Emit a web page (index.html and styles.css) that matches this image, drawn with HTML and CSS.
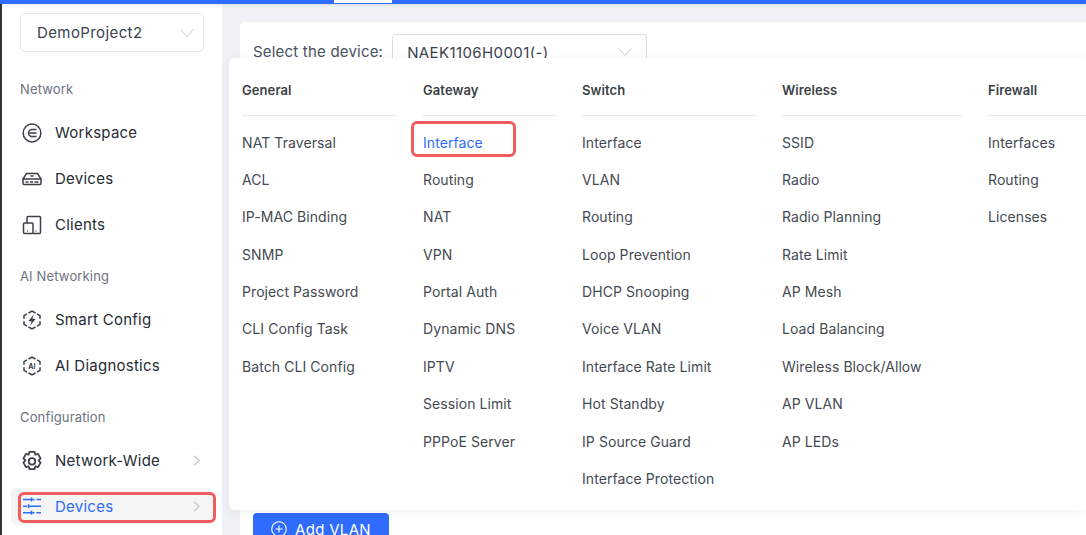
FILE: index.html
```html
<!DOCTYPE html>
<html lang="en">
<head>
<meta charset="utf-8">
<title>Devices</title>
<link rel="stylesheet" href="styles.css">
</head>
<body>
<div class="topbar"><span class="top-tab"></span></div>
<div class="app">
  <aside class="sidebar">
    <div class="project">
      <span>DemoProject2</span>
      <svg class="chev" width="14" height="8" viewBox="0 0 14 8"><path d="M.5.5 7 7.5 13.500.5"/></svg>
    </div>
    <div class="group-title first">Network</div>
    <a class="nav"><svg class="ic" viewBox="0 0 20 20"><circle cx="10" cy="10" r="8.900"/><path d="M14.500 6.500H10a3.500 3.500 0 0 0 0 7h4.500M7.500 10h7"/></svg>Workspace</a>
    <a class="nav"><svg class="ic" viewBox="0 0 20 20"><path d="M4.500 4.500h11L19 10v4.500a1 1 0 0 1-1 1H2a1 1 0 0 1-1-1V10zM1 10h18M8.500 7h3M3.500 13h3M8 13h3M12.500 13h4"/></svg>Devices</a>
    <a class="nav"><svg class="ic" viewBox="0 0 20 20"><path d="M5 8V2.500a1 1 0 0 1 1-1h11.500a1 1 0 0 1 1 1v15a1 1 0 0 1-1 1H11"/><rect x="1.500" y="8" width="9.500" height="10.500" rx="1"/><path d="M5 16h.8M13.500 16h.8"/></svg>Clients</a>
    <div class="group-title">AI Networking</div>
    <a class="nav"><svg class="ic" viewBox="0 0 20 20"><path d="M6.500 3 10 1l3.500 2M15 3.900l3 1.700v3.200M18 11.200v3.200l-3 1.700M13.500 17 10 19l-3.500-2M5 16.100l-3-1.700v-3.200M2 8.800V5.600l3-1.700"/><path d="M11.800 4.500 6.200 11.200h3.400l-1.400 4.300 5.600-6.700h-3.400z" class="fill"/></svg>Smart Config</a>
    <a class="nav"><svg class="ic" viewBox="0 0 20 20"><path d="M6.500 3 10 1l3.500 2M15 3.900l3 1.700v3.200M18 11.200v3.200l-3 1.700M13.500 17 10 19l-3.500-2M5 16.100l-3-1.700v-3.200M2 8.800V5.600l3-1.700"/><text x="10" y="12.600" class="ai">AI</text></svg>AI Diagnostics</a>
    <div class="group-title">Configuration</div>
    <a class="nav"><svg class="ic gear" viewBox="1.500 .2 17 18.600"><path d="M7.600 1h4.800l.7 2.700 2.500-.9 2.400 4.300-1.900 2 1.900 1.900-2.400 4.200-2.500-.8-.7 2.600H7.600l-.7-2.600-2.500.8L2 11 3.900 9 2 7.100l2.400-4.300 2.500.9z"/><circle cx="10" cy="9.900" r="3"/></svg>Network-Wide<svg class="arrow" width="7" height="11" viewBox="0 0 7 11"><path d="m1 .8 5 4.700-5 4.700"/></svg></a>
    <a class="nav active"><svg class="ic sliders" viewBox="0 0 20 20"><path d="M1 2.500h11.500M9.500.5v4M14.500 2.500H19M1 9.200h4M6.500 7.200v4M6.500 9.200H19M1 15.800h11.500M9.500 13.800v4M14.500 15.800H19"/></svg>Devices<svg class="arrow" width="7" height="11" viewBox="0 0 7 11"><path d="m1 .8 5 4.700-5 4.700"/></svg><span class="mark mark-nav"></span></a>
  </aside>
  <main class="content">
    <section class="card">
      <div class="device-row">
        <label>Select the device:</label>
        <div class="select"><span>NAEK1106H0001(-)</span><svg class="chev" width="14" height="8" viewBox="0 0 14 8"><path d="M.5.500 7 7.500 13.500.500"/></svg></div>
      </div>
      <button class="add"><svg width="16" height="16" viewBox="0 0 16 16"><circle cx="8" cy="8" r="7.300"/><path d="M8 4.500v7M4.500 8h7"/></svg>Add VLAN</button>
    </section>
  </main>
</div>
<div class="menu">
  <div class="col c1"><h4>General</h4><ul><li>NAT Traversal</li><li>ACL</li><li>IP-MAC Binding</li><li>SNMP</li><li>Project Password</li><li>CLI Config Task</li><li>Batch CLI Config</li></ul></div>
  <div class="col c2"><h4>Gateway</h4><ul><li class="on">Interface<span class="mark mark-menu"></span></li><li>Routing</li><li>NAT</li><li>VPN</li><li>Portal Auth</li><li>Dynamic DNS</li><li>IPTV</li><li>Session Limit</li><li>PPPoE Server</li></ul></div>
  <div class="col c3"><h4>Switch</h4><ul><li>Interface</li><li>VLAN</li><li>Routing</li><li>Loop Prevention</li><li>DHCP Snooping</li><li>Voice VLAN</li><li>Interface Rate Limit</li><li>Hot Standby</li><li>IP Source Guard</li><li>Interface Protection</li></ul></div>
  <div class="col c4"><h4>Wireless</h4><ul><li>SSID</li><li>Radio</li><li>Radio Planning</li><li>Rate Limit</li><li>AP Mesh</li><li>Load Balancing</li><li>Wireless Block/Allow</li><li>AP VLAN</li><li>AP LEDs</li></ul></div>
  <div class="col c5"><h4>Firewall</h4><ul><li>Interfaces</li><li>Routing</li><li>Licenses</li></ul></div>
</div>
</body>
</html>
```
FILE: styles.css
```css
* { box-sizing: border-box; }
html, body { margin: 0; height: 100%; overflow: hidden; }
body {
  position: relative;
  font-family: Inter, "Noto Sans", sans-serif;
  font-size: 15px;
  letter-spacing: .25px;
  color: #262b33;
  background: #eef1f5;
}
.topbar { height: 4px; background: #2f6bff; padding-left: 334px; box-shadow: 0 1px 3px rgba(0,0,0,.1); position: relative; z-index: 1; }
.top-tab { display: block; width: 58px; height: 3px; background: #fff; }
.app { display: flex; height: 531px; }
.sidebar {
  width: 222px;
  flex: none;
  background: #fff;
  border-left: 2px solid #333;
  padding: 9px 9px 0;
}
.project {
  margin: 0 9px;
  width: 184px;
  height: 39px;
  border: 1px solid #e6e8eb;
  border-radius: 5px;
  display: flex;
  align-items: center;
  justify-content: space-between;
  padding: 0 9px 0 16px;
  letter-spacing: .4px;
  color: #3a4350;
}
.chev { fill: none; stroke: #c6c9ce; stroke-width: 1; }
.group-title { font-size: 13px; letter-spacing: .15px; color: #6b7280; line-height: 18px; margin: 24px 0 0 9px; height: 18px; }
.group-title.first { margin-top: 28px; }
.group-title + .nav { margin-top: 16px; }
.nav {
  position: relative;
  display: flex;
  align-items: center;
  height: 37px;
  margin: 0;
  padding-left: 11px;
  width: 201px;
  margin-bottom: 9px;
  border-radius: 5px;
  color: #262b33;
}
.nav:last-child { margin-bottom: 0; }
.ic { width: 20px; height: 20px; flex: none; margin-right: 13px; fill: none; stroke: #3b4048; stroke-width: 1.5; }
.ic .fill { fill: #3b4048; stroke: none; }
.ic .ai { font: 700 7px Inter, sans-serif; text-anchor: middle; fill: #3b4048; stroke: none; }
.ic.gear { stroke-width: 1.6; stroke-linejoin: round; }
.arrow { margin-left: auto; margin-right: 12px; fill: none; stroke: #c0c3c8; stroke-width: 1.2; }
.nav.active { background: #f5f5f5; color: #2f6bff; }
.nav.active .ic { stroke: #2f6bff; }
.mark { position: absolute; border: 3px solid #f25c5c; border-radius: 6px; pointer-events: none; }
.mark-nav { left: 7px; top: 4px; width: 198px; height: 31px; }
.mark-menu { left: -12px; top: -3px; width: 105px; height: 36px; }
.content { flex: 1; min-width: 0; padding: 18px 0 0 18px; }
.card { background: #fff; border-radius: 5px 0 0 0; height: 513px; padding: 12px 13px; display: flex; flex-direction: column; }
.device-row { display: flex; align-items: center; gap: 9px; height: 36px; }
.device-row label { color: #4a5260; letter-spacing: .2px; margin-bottom: 2px; }
.select {
  width: 255px;
  height: 36px;
  border: 1px solid #d9dce1;
  border-radius: 4px;
  display: flex;
  align-items: center;
  justify-content: space-between;
  padding: 0 14px;
  letter-spacing: .4px;
  color: #3a4350;
}
.add {
  margin-top: 443px;
  width: 136px;
  height: 32px;
  flex: none;
  border: 0;
  border-radius: 4px;
  background: #2f6bff;
  color: #fff;
  font: inherit;
  letter-spacing: .3px;
  display: flex;
  align-items: center;
  justify-content: center;
  gap: 8px;
}
.add svg { fill: none; stroke: #fff; stroke-width: 1.1; }
.menu {
  position: absolute;
  left: 229px;
  top: 58px;
  width: 857px;
  height: 452px;
  background: #fff;
  border-radius: 5px 0 0 5px;
  box-shadow: 0 2px 12px rgba(0,0,0,.06);
  padding: 0 0 0 13px;
  display: grid;
  grid-template-columns: 155px 133px 174px 180px 98px;
  column-gap: 26px;
  font-size: 14px;
  letter-spacing: .08px;
  color: #444a52;
  z-index: 2;
}
.c1 { padding-right: 1px; }
.col h4 {
  margin: 0;
  height: 58px;
  padding-top: 23px;
  line-height: 18px;
  font-size: 13px;
  font-weight: 600;
  color: #3a3f46;
  border-bottom: 1px solid #e8e8e8;
}
.col ul { list-style: none; margin: 7.780px 0 0; padding: 0; }
.col li { position: relative; height: 37.350px; line-height: 37.350px; white-space: nowrap; }
.col li.on { color: #2f6bff; }
```
